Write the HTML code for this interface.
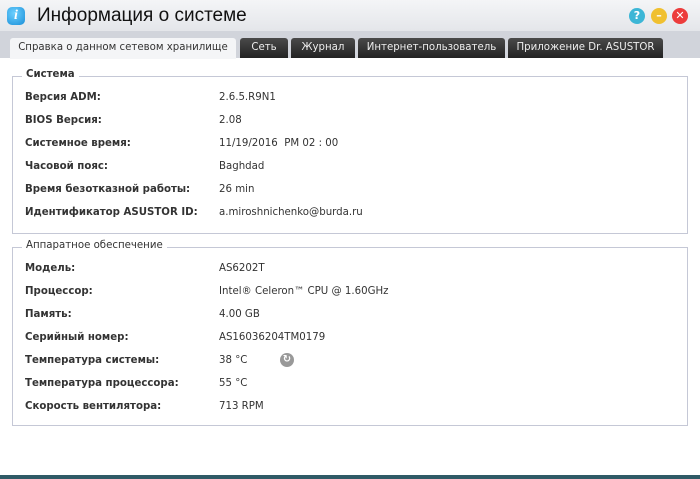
<!DOCTYPE html>
<html><head><meta charset="utf-8"><style>
*{margin:0;padding:0;box-sizing:border-box}
body{width:700px;height:479px;overflow:hidden;background:#fff;font-family:"DejaVu Sans","Liberation Sans",sans-serif;position:relative}
.hdr{position:absolute;left:0;top:0;width:700px;height:31px;background:linear-gradient(#f4f5f7,#e4e6ea)}
.band{position:absolute;left:0;top:31px;width:700px;height:27px;background:#d1d4db}
.title{position:absolute;left:37px;top:5px;font-size:19px;color:#111;font-family:"Liberation Sans",sans-serif}
.ic{position:absolute;top:8px;width:16px;height:16px;border-radius:50%;color:#fff;font-size:11px;font-weight:bold;text-align:center;line-height:16px}
.tab{position:absolute;top:38px;height:20px;background:linear-gradient(#4a4a4a,#222);color:#eee;font-size:10.2px;text-align:center;line-height:20px;border-radius:3px 3px 0 0}
.tab.a{background:#f4f5f7;color:#333;height:21px}
.box{position:absolute;left:12px;width:676px;border:1px solid #c5c8d6}
.lg{position:absolute;left:9px;top:-8px;background:#fff;padding:0 4px;font-size:10.2px;font-weight:bold;color:#333}
.r{position:absolute;font-size:10.2px;color:#333}
.l{left:12px;font-weight:bold}
.v{left:206px}
</style></head><body>
<div class="hdr"></div><div class="band"></div>
<div class="ic" style="left:7px;top:7px;width:18px;height:18px;background:radial-gradient(circle at 40% 35%,#6cd0ff,#1a8fd8);border-radius:5px;font-style:italic;font-family:'Liberation Serif',serif;font-size:14px;line-height:18px">i</div>
<div class="title">Информация о системе</div>
<div class="ic" style="left:629px;background:#3cb6d6">?</div>
<div class="ic" style="left:651px;background:#f0c030">–</div>
<div class="ic" style="left:672px;background:#ec3c3c">✕</div>
<div class="tab a" style="left:10px;width:226px">Справка о данном сетевом хранилище</div>
<div class="tab" style="left:240px;width:48px">Сеть</div>
<div class="tab" style="left:291px;width:64px">Журнал</div>
<div class="tab" style="left:358px;width:147px">Интернет-пользователь</div>
<div class="tab" style="left:508px;width:155px">Приложение Dr. ASUSTOR</div>
<div class="box" style="top:76px;height:158px"><div class="lg">Система</div>
<div class="r l" style="top:15px">Версия ADM:</div><div class="r v" style="top:15px">2.6.5.R9N1</div>
<div class="r l" style="top:38px">BIOS Версия:</div><div class="r v" style="top:38px">2.08</div>
<div class="r l" style="top:61px">Системное время:</div><div class="r v" style="top:61px">11/19/2016&nbsp; PM 02 : 00</div>
<div class="r l" style="top:84px">Часовой пояс:</div><div class="r v" style="top:84px">Baghdad</div>
<div class="r l" style="top:107px">Время безотказной работы:</div><div class="r v" style="top:107px">26 min</div>
<div class="r l" style="top:130px">Идентификатор ASUSTOR ID:</div><div class="r v" style="top:130px">a.miroshnichenko@burda.ru</div>
</div>
<div class="box" style="top:247px;height:179px"><div class="lg" style="font-weight:normal">Аппаратное обеспечение</div>
<div class="r l" style="top:15px">Модель:</div><div class="r v" style="top:15px">AS6202T</div>
<div class="r l" style="top:38px">Процессор:</div><div class="r v" style="top:38px">Intel® Celeron™ CPU @ 1.60GHz</div>
<div class="r l" style="top:61px">Память:</div><div class="r v" style="top:61px">4.00 GB</div>
<div class="r l" style="top:84px">Серийный номер:</div><div class="r v" style="top:84px">AS16036204TM0179</div>
<div class="r l" style="top:107px">Температура системы:</div><div class="r v" style="top:107px">38 °C</div>
<div style="position:absolute;left:267px;top:105px;width:14px;height:14px;border-radius:50%;background:#999;color:#fff;font-size:10px;text-align:center;line-height:14px;font-weight:bold">↻</div>
<div class="r l" style="top:130px">Температура процессора:</div><div class="r v" style="top:130px">55 °C</div>
<div class="r l" style="top:153px">Скорость вентилятора:</div><div class="r v" style="top:153px">713 RPM</div>
</div>
<div style="position:absolute;left:0;top:475px;width:700px;height:4px;background:#2f5a66"></div>
</body></html>
